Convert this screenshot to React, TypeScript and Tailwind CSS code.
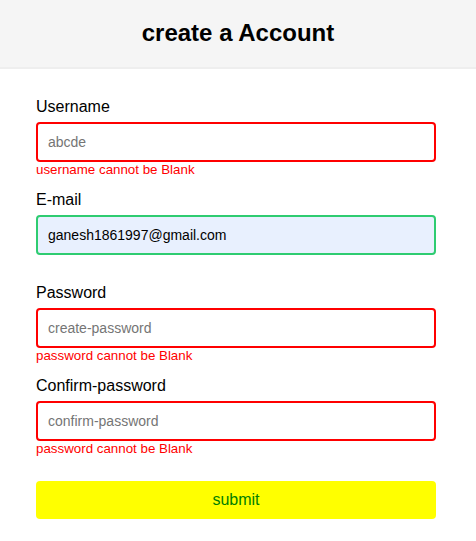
import React from 'react';

type Field = {
  label: string;
  type: string;
  placeholder: string;
  value?: string;
  error?: string;
  valid?: boolean;
};

const fields: Field[] = [
  { label: 'Username', type: 'text', placeholder: 'abcde', error: 'username cannot be Blank' },
  { label: 'E-mail', type: 'email', placeholder: 'email', value: 'ganesh1861997@gmail.com', valid: true },
  { label: 'Password', type: 'password', placeholder: 'create-password', error: 'password cannot be Blank' },
  { label: 'Confirm-password', type: 'password', placeholder: 'confirm-password', error: 'password cannot be Blank' },
];

export default function App() {
  return (
    <div className="min-h-screen bg-white font-['Liberation_Sans',Arial,sans-serif] text-black">
      {/* Header */}
      <div className="h-[69px] bg-[#f5f5f5] border-b-2 border-[#eeeeee] flex items-center justify-center">
        <h1 className="text-[24px] font-bold leading-none -mt-[2px]">create a Account</h1>
      </div>

      {/* Form */}
      <form className="pt-[29px] pl-[36px]" onSubmit={(e) => e.preventDefault()}>
        {fields.map((f) => (
          <div key={f.label} className="w-[400px] mb-[14px]">
            <label className="block text-[16px] leading-[18px] mb-[6px]">{f.label}</label>
            <input
              type={f.type}
              placeholder={f.placeholder}
              defaultValue={f.value}
              className={
                f.valid
                  ? 'block w-full h-[40px] px-[10px] text-[14px] rounded-[4px] border-2 border-[#2ecc71] bg-[#e8f0fe] outline-none'
                  : 'block w-full h-[40px] px-[10px] text-[14px] rounded-[4px] border-2 border-[#ff0000] bg-white outline-none placeholder:text-[#757575]'
              }
            />
            <p className="h-[15px] text-[13.33px] leading-[15px] text-[#ff0000]">{f.error}</p>
          </div>
        ))}

        <button
          type="submit"
          className="mt-[11px] w-[400px] h-[38px] rounded-[4px] bg-[#ffff00] text-[16px] text-[#008000]"
        >
          submit
        </button>
      </form>
    </div>
  );
}
